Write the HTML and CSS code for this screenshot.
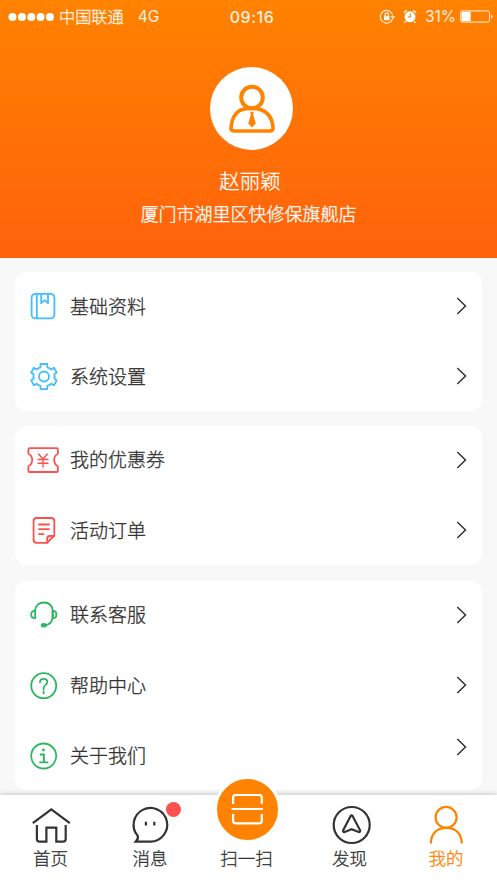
FILE: index.html
```html
<!DOCTYPE html>
<html lang="zh-CN">
<head>
<meta charset="utf-8">
<title>我的</title>
<link rel="stylesheet" href="styles.css">
</head>
<body>
<div class="app">
  <header class="hero">
    <div class="status">
      <div class="status-left">
        <svg class="signal" width="47" height="10" viewBox="0 0 47 10" fill="currentColor"><circle cx="4.5" cy="5" r="4"/><circle cx="14" cy="5" r="4"/><circle cx="23.3" cy="5" r="4"/><circle cx="32.6" cy="5" r="4"/><circle cx="42" cy="5" r="4"/></svg>
        <span class="carrier">中国联通</span><span class="network">4G</span>
      </div>
      <div class="time">09:16</div>
      <div class="status-right">
        <svg width="17" height="16" viewBox="0 0 17 16" fill="none" stroke="currentColor" stroke-width="1.2"><path d="M13.6 9.7A6.3 6.3 0 1 1 13.8 6.5"/><path d="M11.4 7.2h5L13.9 10z" fill="currentColor" stroke="none"/><rect x="5" y="6.8" width="5.6" height="4.4" fill="currentColor" stroke="none"/><path d="M6.1 7V5.6a1.7 1.7 0 0 1 3.4 0V7"/></svg>
        <svg class="alarm" width="14" height="15" viewBox="0 0 14 15" fill="none"><circle cx="7" cy="7.8" r="5.5" fill="currentColor"/><path d="M.9 3.8 3.8 1.2M13.1 3.8l-2.9-2.6M2.8 12.3l-1.3 1.500M11.2 12.3l1.3 1.5" stroke="currentColor" stroke-width="1.3"/><path d="M7.3 4.6V8H4.7" stroke="#ff8200" stroke-width="1.1"/></svg>
        <span class="percent">31%</span>
        <svg width="33" height="13" viewBox="0 0 33 13" fill="none"><rect x=".7" y=".9" width="28.8" height="11.2" rx="1.8" stroke="currentColor" stroke-width="1"/><rect x="1.600" y="1.800" width="9" height="9.400" fill="#fff"/><path d="M31 4.4q1.5.5 1.5 2.1T31 8.6z" fill="currentColor"/></svg>
      </div>
    </div>
    <div class="avatar">
      <svg width="83" height="83" viewBox="210 67 83 83" fill="none" stroke="#ff8200" stroke-width="4"><circle cx="252" cy="97.5" r="10.8"/><path d="M240 110.2Q232 115 231 127.500Q230.500 131 234.500 131H269.500Q273.500 131 273 127.500Q271.500 108.800 252 108.300Q245 108.300 240 110.200Z" stroke-width="3.600"/><path d="M250.300 111.800h3.300l-.4 3 2.600 8.600-3.800 4-3.800-4 2.600-8.600z" fill="#ff8200" stroke="none"/></svg>
    </div>
    <h1 class="name">赵丽颖</h1>
    <p class="store">厦门市湖里区快修保旗舰店</p>
  </header>

  <main class="menu">
    <section class="card">
      <a class="row blue">
        <svg class="icon" viewBox="25 288 36 36"><rect x="31.600" y="293.800" width="22.800" height="24.600" rx="3.800"/><path d="M36.800 294v24.200M41.200 294v9.200l3.400-3 3.400 3V294"/></svg>
        <span class="label">基础资料</span>
        <svg class="chevron" viewBox="0 0 12 18"><path d="m2.300 1 8.200 8-8.200 8"/></svg>
      </a>
      <a class="row last blue">
        <svg class="icon" viewBox="-18 -18.500 36 36"><path d="M-3.200-12.500H3.600V-9.200Q6-8.500 7.600-7L10.300-8.700 13.100-3.900 10.700-2.400Q11.200 0 10.700 2.300L13.100 3.900 10.300 8.700 7.600 7.200Q6 8.600 3.600 9.400V12.600H-3.200V9.400Q-5.600 8.600-7.200 7.200L-9.800 8.700-12.600 3.900-10 2.300Q-10.600 0-10 -2.400L-12.600-3.900-9.800-8.700-7.200-7Q-5.600-8.500-3.200-9.200Z" transform="translate(.7 0)"/><circle cx="1" cy="0" r="5"/></svg>
        <span class="label">系统设置</span>
        <svg class="chevron" viewBox="0 0 12 18"><path d="m2.300 1 8.200 8-8.200 8"/></svg>
      </a>
    </section>

    <section class="card">
      <a class="row red">
        <svg class="icon" viewBox="25 442 36 36"><path d="M29.600 448.200H56.600Q57.900 448.200 57.900 449.500V453.800Q54.200 455.500 54.200 460T57.900 466.200V470.700Q57.900 472 56.600 472H29.600Q28.400 472 28.400 470.700V466.200Q32.200 464.500 32.200 460T28.400 453.800V449.500Q28.400 448.200 29.600 448.200Z"/><path d="M38.600 454l4.400 5 4.400-5M43 459v8M38 459.500h10M38 463.200h10" stroke-width="1.400"/></svg>
        <span class="label raised">我的优惠券</span>
        <svg class="chevron" viewBox="0 0 12 18"><path d="m2.300 1 8.200 8-8.200 8"/></svg>
      </a>
      <a class="row last red">
        <svg class="icon" viewBox="25 512 36 36"><path d="M36.600 518H51.300Q54.300 518 54.300 521V535.500L47.200 542.800H36.600Q33.600 542.800 33.600 539.800V521Q33.600 518 36.600 518Z"/><path d="M47.200 542.600V538.500Q47.200 536 49.700 536H54.200M39 524.500H49M39 529.200H49M39 534.200H43.500"/></svg>
        <span class="label">活动订单</span>
        <svg class="chevron" viewBox="0 0 12 18"><path d="m2.300 1 8.200 8-8.200 8"/></svg>
      </a>
    </section>

    <section class="card support">
      <a class="row green">
        <svg class="icon" viewBox="25 597 36 36"><path d="M35.200 610.500C35.500 605.500 39 602.500 44 602.500S52.500 605.800 52.600 610.500V617Q52 624.800 44.500 625.300"/><path d="M35.200 610.800V618.200Q31.200 618.500 31.200 614.500T35.200 610.800ZM52.700 610.800V618.200Q56.400 618.500 56.400 614.500T52.700 610.800Z"/><rect x="41" y="623.500" width="5.800" height="3.600" rx="1.800" fill="currentColor" stroke-width=".6"/></svg>
        <span class="label raised">联系客服</span>
        <svg class="chevron" viewBox="0 0 12 18"><path d="m2.300 1 8.200 8-8.200 8"/></svg>
      </a>
      <a class="row middle green">
        <svg class="icon" viewBox="25 667 36 36"><circle cx="43.700" cy="685.700" r="12.500"/><path d="M40 682.300Q40 678.800 43.700 678.800T47.300 682Q47.300 683.700 45.400 685.100T43.600 688.600V689.300M43.600 691.500V693.400"/></svg>
        <span class="label">帮助中心</span>
        <svg class="chevron" viewBox="0 0 12 18"><path d="m2.300 1 8.200 8-8.200 8"/></svg>
      </a>
      <a class="row end green">
        <svg class="icon" viewBox="25 737 36 36"><circle cx="43.700" cy="755" r="12.500"/><path d="M40.500 753.500H43.900V761.300M40 761.400H47.500"/><circle cx="43.400" cy="749" r="1.400" fill="currentColor" stroke="none"/></svg>
        <span class="label raised">关于我们</span>
        <svg class="chevron" viewBox="0 0 12 18"><path d="m2.300 1 8.200 8-8.200 8"/></svg>
      </a>
    </section>
  </main>

  <nav class="tabs">
    <a class="tab">
      <svg class="tab-icon" viewBox="31 805 40 40"><path d="M32.800 823.200 51.300 809.300 69.800 823.200M36.900 825V839Q36.900 841.600 39.500 841.600H46.400V827.700H56.300V841.600H63Q65.700 841.600 65.700 839V825"/></svg>
      <span>首页</span>
    </a>
    <a class="tab">
      <svg class="tab-icon" viewBox="130 805 40 40"><path d="M135.800 841.600H150.500A16.800 16.800 0 1 0 137.700 835.800Q138.800 838.500 135.800 841.600Z"/><path d="M145.900 821.800v3.600M154.300 821.800v3.600"/></svg>
      <i class="badge"></i>
      <span>消息</span>
    </a>
    <a class="tab scan">
      <div class="scan-button"><svg width="61" height="61" viewBox="217.500 779 61 61" fill="none" stroke="#fff" stroke-width="2.200"><path d="M233.600 804V797.500Q233.600 795 236.300 795H259.700Q262.300 795 262.300 797.500V804M233.600 814V820.700Q233.600 823.300 236.300 823.300H259.700Q262.300 823.300 262.300 820.700V814M232 809H263.500"/></svg></div>
      <span>扫一扫</span>
    </a>
    <a class="tab">
      <svg class="tab-icon" viewBox="330 805 40 40"><circle cx="351.700" cy="825" r="18"/><path d="M350.500 816.200Q351.600 814.500 352.700 816.200L360.200 830.500Q360.500 832.300 358.600 832L351.600 829.200 344.700 832Q342.700 832.300 343.100 830.500Z"/></svg>
      <span>发现</span>
    </a>
    <a class="tab active">
      <svg class="tab-icon" viewBox="426 805 40 40"><circle cx="446.100" cy="817.400" r="10.500"/><path d="M430.800 843.500C431 833.500 437 827.900 446.300 827.900S461.600 833.500 461.800 843.500"/></svg>
      <span>我的</span>
    </a>
  </nav>
</div>
</body>
</html>
```
FILE: styles.css
```css
* { box-sizing: border-box; }

body {
  margin: 0;
  background: #f8f8f8;
  color: #333;
  font-family: "Noto Sans CJK SC", sans-serif;
  font-weight: 300;
  -webkit-text-stroke: .3px currentColor;
}

svg { display: block; flex: none; }

.app {
  display: flex;
  flex-direction: column;
  height: 883px;
  overflow: hidden;
}

.hero {
  display: flex;
  flex-direction: column;
  align-items: center;
  flex: none;
  height: 258px;
  color: #fff;
  background: linear-gradient(#ff8200, #ff620c);
}

.status {
  display: grid;
  grid-template-columns: 1fr auto 1fr;
  align-items: center;
  width: 100%;
  height: 33px;
  padding: 0 4px 0 8px;
  color: #fff1e2;
  font-size: 16px;
  line-height: 20px;
}

.status-left, .status-right { display: flex; align-items: center; }
.status-right { justify-content: flex-end; }
.signal { margin-right: 4px; color: #fff; }
.carrier { padding-bottom: 2px; font-size: 16.2px; }
.network, .time, .percent {
  font-family: Inter, sans-serif;
  font-weight: 400;
  -webkit-text-stroke: 0;
}
.network { margin-left: 14px; font-size: 15.5px; }
.time { padding-left: 3px; font-weight: 500; letter-spacing: .5px; }
.alarm { margin: 0 8px 0 7px; color: #fff; }
.percent { margin-right: 4px; font-size: 15.5px; }

.avatar {
  width: 83px;
  height: 83px;
  margin: 34px 0 0 6px;
  border-radius: 50%;
  background: #fff;
}

.name {
  margin: 15px 0 0 3px;
  font-size: 20.5px;
  font-weight: 300;
  line-height: 30px;
}

.store {
  margin: 5px 0 0;
  font-size: 18px;
  line-height: 26px;
}

.menu {
  display: flex;
  flex-direction: column;
  flex: none;
  gap: 15px;
  height: 537px;
  padding: 14px 15px 0;
}

.card { border-radius: 12px; background: #fff; }
.support { margin-top: 1px; }

.row {
  display: flex;
  align-items: center;
  height: 68px;
  padding: 0 15px 0 10px;
}

.row.last { height: 71px; }
.row.middle { height: 72px; }
.row.end { height: 69px; }
.row.end .chevron { margin-bottom: 18px; }

.icon {
  width: 36px;
  height: 36px;
  margin-right: 9px;
  fill: none;
  stroke: currentColor;
  stroke-width: 1.8;
  stroke-linecap: round;
  stroke-linejoin: round;
}

.blue { color: #3fbfff; }
.red { color: #ff5050; }
.green { color: #27b75d; }

.label {
  flex: 1;
  color: #333;
  font-size: 19px;
  line-height: 28px;
}

.raised { padding-bottom: 2px; }

.chevron {
  width: 12px;
  height: 18px;
  fill: none;
  stroke: #333;
  stroke-width: 1.5;
}

.tabs {
  display: grid;
  grid-template-columns: 101px 98px 97px 107px 86px;
  flex: none;
  height: 88px;
  background: #fff;
  box-shadow: 0 -1px 5px rgba(0, 0, 0, .2);
}

.tab {
  position: relative;
  display: flex;
  flex-direction: column;
  align-items: center;
  padding-top: 10px;
  font-size: 17.5px;
  line-height: 26px;
}

.tab-icon {
  overflow: visible;
  width: 40px;
  height: 40px;
  fill: none;
  stroke: currentColor;
  stroke-width: 2.2;
}

.active { color: #ff8200; }

.badge {
  position: absolute;
  top: 7px;
  left: 65px;
  width: 15px;
  height: 15px;
  border-radius: 50%;
  background: #ff5050;
}

.scan { padding-top: 0; }
.scan span { margin-right: 2px; }

.scan-button {
  margin: -19px 0 2px;
  border: 3px solid #fff;
  border-radius: 50%;
  background: #ff8200;
}
```
